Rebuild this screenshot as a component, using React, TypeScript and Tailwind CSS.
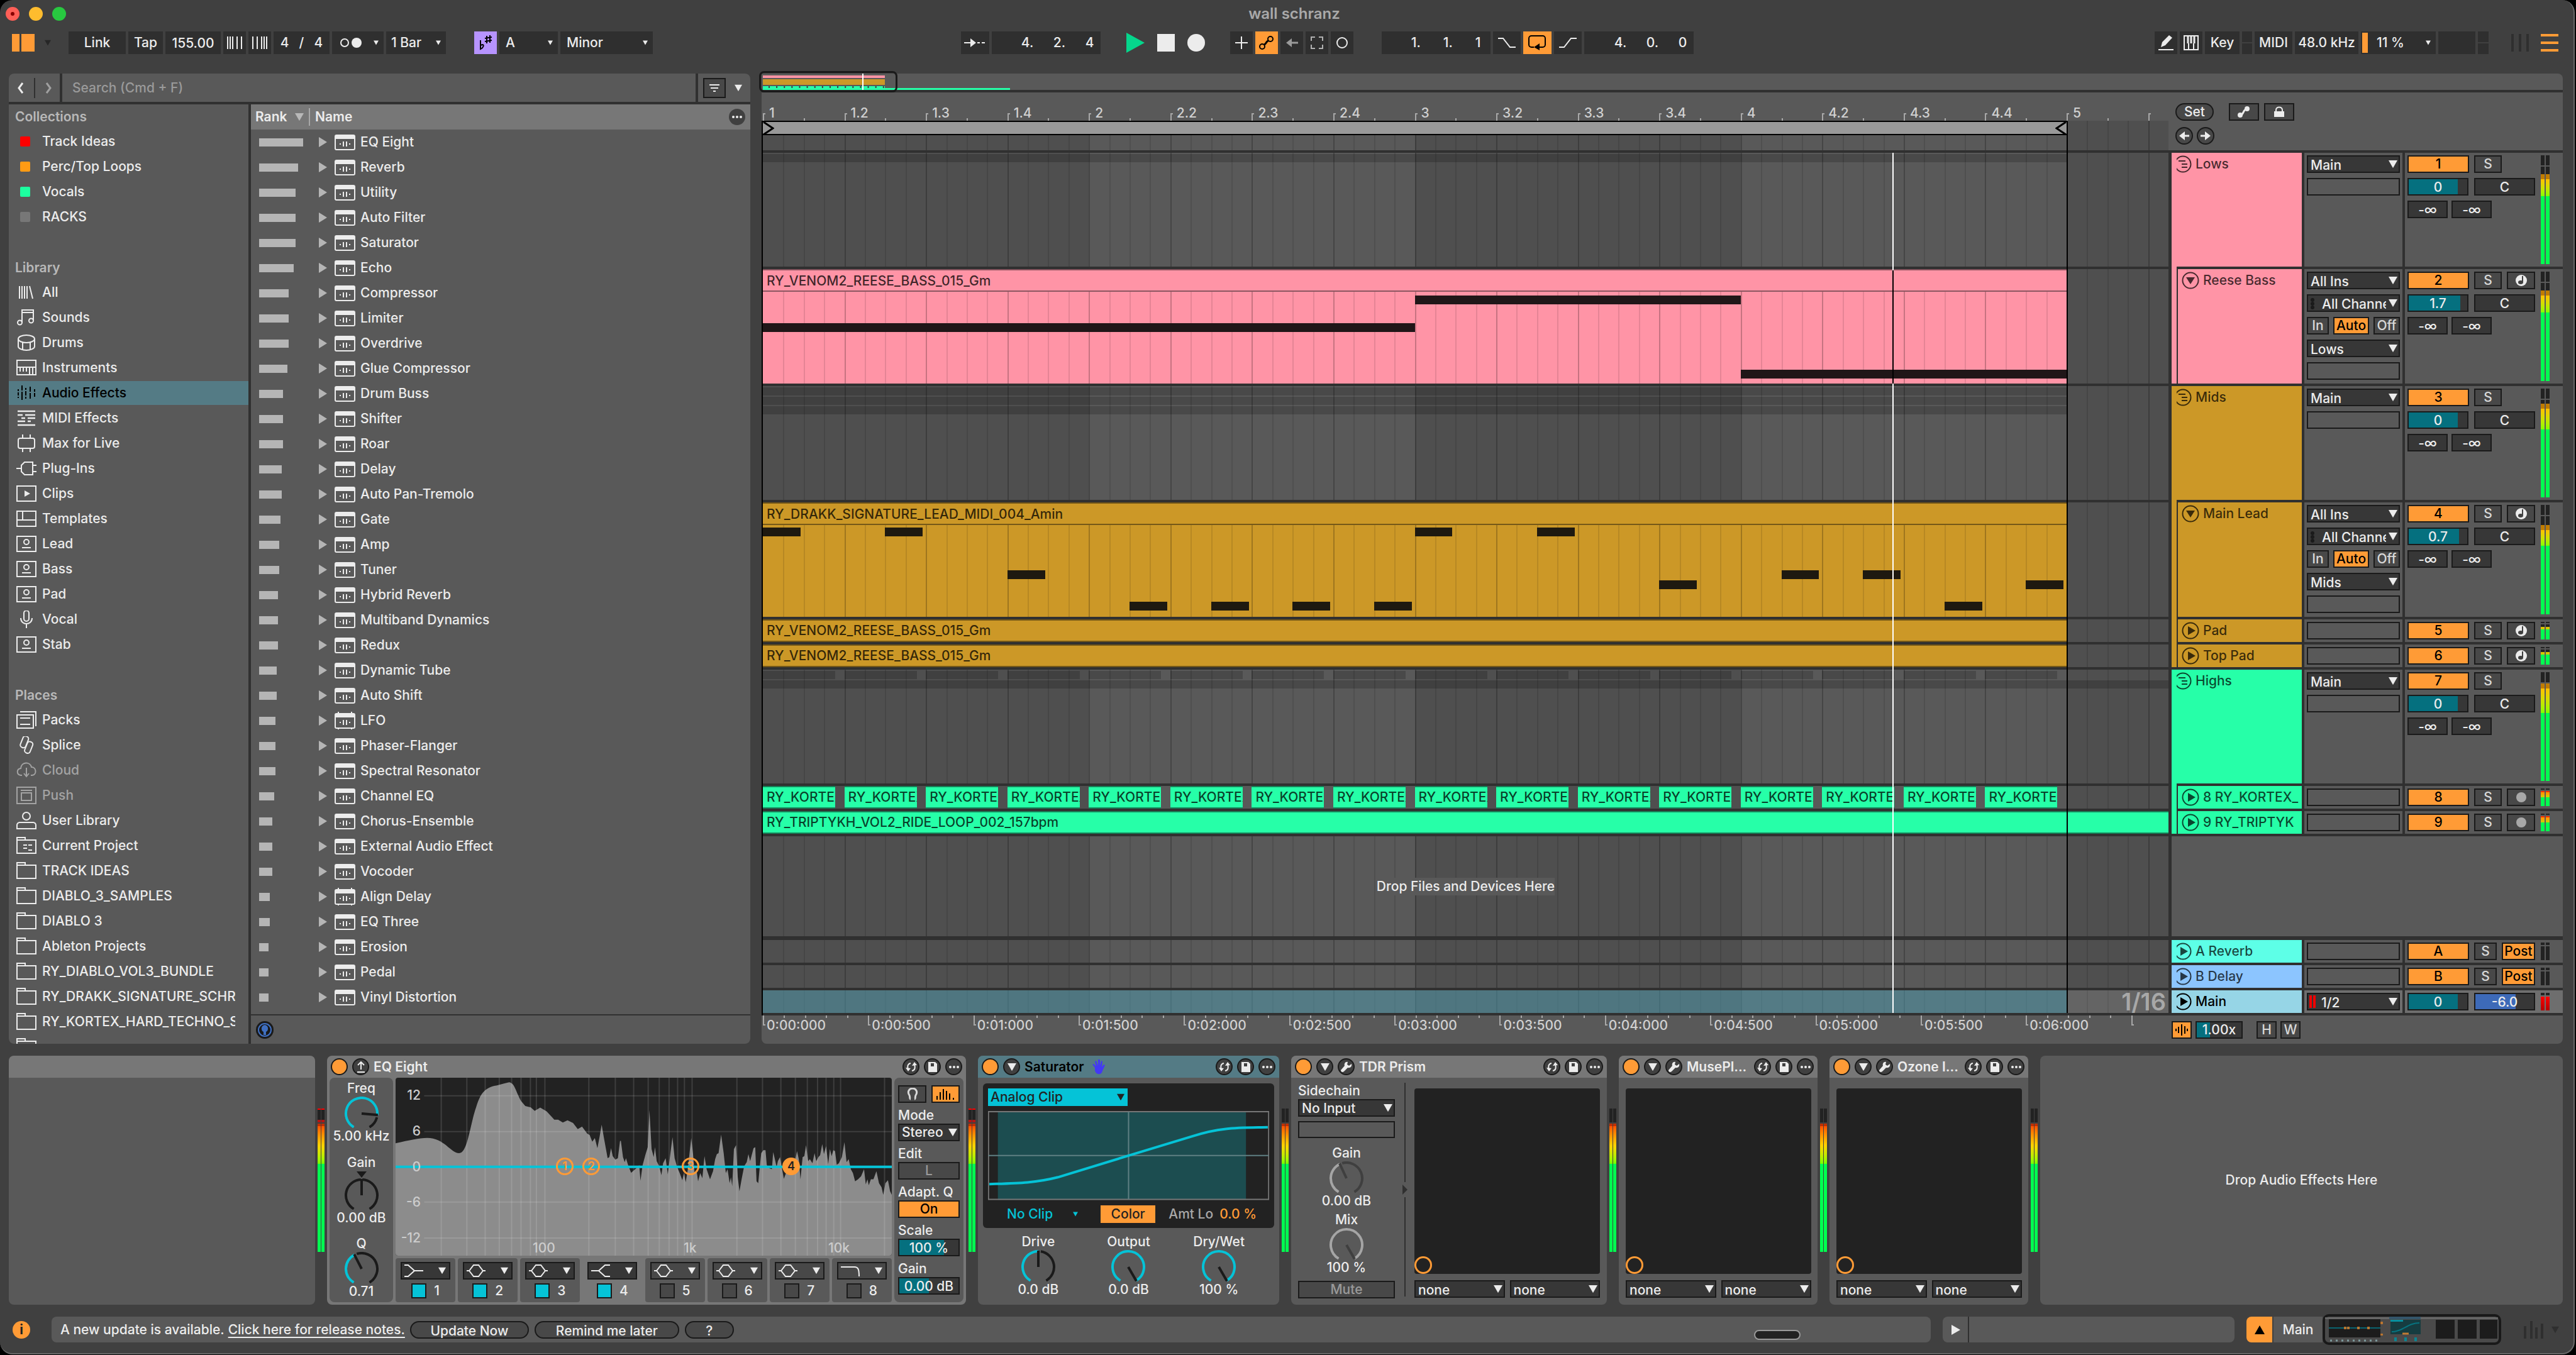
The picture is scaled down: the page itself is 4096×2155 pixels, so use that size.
import type { ReactNode } from "react";
import clsx from "clsx";

/* ---------- small shared pieces ---------- */

function Down({ className = "w-4 h-4" }: { className?: string }) {
  return (
    <svg viewBox="0 0 16 16" className={clsx("shrink-0", className)} fill="currentColor">
      <path d="M0 1h16L8 15z" />
    </svg>
  );
}

function Svg({ w, h, children, className }: { w: number; h: number; children: ReactNode; className?: string }) {
  return (
    <svg
      width={w}
      height={h}
      viewBox={`0 0 ${w} ${h}`}
      fill="none"
      stroke="currentColor"
      strokeWidth="2"
      className={clsx("shrink-0", className)}
    >
      {children}
    </svg>
  );
}

function Select({ value, label, className, pad = "pl-1" }: { value: string; label: string; className?: string; pad?: string }) {
  return (
    <div className={clsx("relative h-7 border-2 border-[#1a1a1a] bg-[#373737] text-[#ececec]", className)}>
      <select aria-label={label} className={clsx("block w-full h-full pr-5 appearance-none bg-transparent outline-none", pad)}>
        <option>{value}</option>
      </select>
      <Down className="absolute right-0.5 top-1 w-3.5 h-4 pointer-events-none" />
    </div>
  );
}

function Value({ value, label, fill = 0, color = "bg-[#05707f]", className }: { value: string; label: string; fill?: number; color?: string; className?: string }) {
  return (
    <div className={clsx("relative h-7 border-2 border-[#1a1a1a] bg-[#373737]", className)}>
      <div className={clsx("absolute inset-y-0 left-0", color)} style={{ width: `${fill}%` }} />
      <input aria-label={label} defaultValue={value} className="relative block w-full h-full bg-transparent text-center text-[#ececec] outline-none" />
    </div>
  );
}

function Box({ children, label, on, dim, className }: { children?: ReactNode; label?: string; on?: boolean; dim?: boolean; className?: string }) {
  return (
    <button
      aria-label={label}
      className={clsx(
        "flex items-center justify-center h-7 border-2 border-[#1a1a1a] overflow-hidden shrink-0",
        on ? "bg-[#ff9b36] text-black" : "bg-[#484848]",
        !on && (dim ? "text-[#9a9a9a]" : "text-[#d8d8d8]"),
        className
      )}
    >
      {children}
    </button>
  );
}

/* ---------- top bar ---------- */

function Cell({ children, className, label, on }: { children?: ReactNode; className?: string; label?: string; on?: boolean }) {
  return (
    <button
      aria-label={label}
      className={clsx("flex items-center h-9 shrink-0", on ? "bg-[#ff9b36] text-black" : "bg-[#2f2f2f] text-[#ececec]", className ?? "justify-center w-9")}
    >
      {children}
    </button>
  );
}

function Position({ parts, className }: { parts: string[]; className?: string }) {
  return (
    <div className={clsx("flex items-center justify-end h-9 bg-[#2f2f2f] text-[#ececec] pr-2.5", className)}>
      <span className="w-[51px]">{parts[0]}.</span>
      <span className="w-[51px]">{parts[1]}.</span>
      <span className="w-3.5">{parts[2]}</span>
    </div>
  );
}

function Toolbar() {
  return (
    <div className="flex items-center h-9 mt-[6px] pl-[19px] pr-6">
      <button aria-label="Browser" className="flex gap-[3px]">
        <span className="w-3 h-7 bg-[#ff9b36]" />
        <span className="w-[21px] h-7 bg-[#ff9b36]" />
      </button>
      <Down className="w-3.5 h-2.5 ml-3.5 mr-[26px] text-[#262626]" />
      <div className="flex gap-1">
        <Cell className="justify-center w-[91px]">Link</Cell>
        <Cell className="justify-center w-[55px]">Tap</Cell>
        <input aria-label="Tempo" defaultValue="155.00" className="w-[88px] h-9 bg-[#2f2f2f] text-center text-[#ececec] outline-none" />
        <Cell label="Nudge down">
          <Svg w={24} h={20}><path d="M1 0v20M5 0v20M9 0v20M16 0v20M23 0v20" /></Svg>
        </Cell>
        <Cell label="Nudge up">
          <Svg w={24} h={20}><path d="M1 0v20M8 0v20M15 0v20M19 0v20M23 0v20" /></Svg>
        </Cell>
        <Cell className="justify-center gap-4 w-[89px]"><span>4</span><span>/</span><span>4</span></Cell>
        <Cell label="Metronome" className="w-[82px] pl-3 pr-1.5 justify-between">
          <Svg w={36} h={16}><circle cx="8" cy="8" r="6" /><circle cx="27" cy="8" r="8" fill="currentColor" stroke="none" /></Svg>
          <Down className="w-3 h-2" />
        </Cell>
        <Cell className="w-[95px] pl-2 pr-1.5 justify-between">1 Bar<Down className="w-3 h-2" /></Cell>
      </div>
      <div className="flex gap-1 ml-[45px]">
        <button aria-label="Scale mode" className="flex items-center justify-center w-9 h-9 bg-[#b794ff] text-black">
          <Svg w={24} h={24}>
            <path d="M4 8v14c5-2 6-7 3-7l-3 1M14 1v12M19 0v12M11 5l11-2M11 10l11-2" />
          </Svg>
        </button>
        <Cell className="w-[93px] pl-2.5 pr-1.5 justify-between">A<Down className="w-3 h-2" /></Cell>
        <Cell className="w-[147px] pl-2.5 pr-1.5 justify-between">Minor<Down className="w-3 h-2" /></Cell>
      </div>

      <div className="flex-[491]" />
      <div className="flex gap-1">
        <Cell label="Follow" className="justify-center w-[45px]">
          <Svg w={34} h={16}><path d="M0 8h14M21 8h4M28 8h5" /><path d="M10 1l9 7-9 7z" fill="currentColor" stroke="none" /></Svg>
        </Cell>
        <Position parts={["4", "2", "4"]} className="w-[173px]" />
      </div>
      <div className="flex items-center gap-5 ml-[41px]">
        <button aria-label="Play"><svg width="29" height="32"><path d="M0 0L29 16L0 32z" fill="#05d68c" /></svg></button>
        <button aria-label="Stop" className="w-7 h-7 bg-[#ececec]" />
        <button aria-label="Record" className="w-7 h-7 rounded-full bg-[#ececec]" />
      </div>
      <div className="flex gap-1 ml-10">
        <Cell label="Overdub"><Svg w={20} h={20}><path d="M10 0v20M0 10h20" /></Svg></Cell>
        <Cell label="Automation arm" on>
          <Svg w={26} h={24}><circle cx="6" cy="18" r="4" /><circle cx="19" cy="6" r="4" /><path d="M9 15c4-1 3-6 7-6" strokeWidth="3" /></Svg>
        </Cell>
        <Cell label="Re-enable automation">
          <Svg w={20} h={16} className="text-[#9a9a9a]"><path d="M8 8h12" strokeWidth="3" /><path d="M10 1L1 8l9 7z" fill="currentColor" stroke="none" /></Svg>
        </Cell>
        <Cell label="Capture MIDI">
          <Svg w={20} h={20} className="text-[#b0b0b0]"><path d="M1 7V1h6M13 1h6v6M19 13v6h-6M7 19H1v-6" /></Svg>
        </Cell>
        <Cell label="Session record"><Svg w={20} h={20}><circle cx="10" cy="10" r="8" /></Svg></Cell>
      </div>
      <div className="flex gap-1 ml-[45px]">
        <Position parts={["1", "1", "1"]} className="w-[173px]" />
        <Cell label="Punch in" className="justify-center w-11"><Svg w={28} h={16}><path d="M0 1h8l11 14h9" /></Svg></Cell>
        <Cell label="Loop" on className="justify-center w-[45px]">
          <Svg w={30} h={24}><path d="M10 19H6a4 4 0 0 1-4-4V5a4 4 0 0 1 4-4h18a4 4 0 0 1 4 4v10a4 4 0 0 1-4 4h-5" /><path d="M10 19l9-6v11z" fill="currentColor" stroke="none" /></Svg>
        </Cell>
        <Cell label="Punch out" className="justify-center w-11"><Svg w={28} h={16}><path d="M0 15h8L19 1h9" /></Svg></Cell>
        <Position parts={["4", "0", "0"]} className="w-[174px]" />
      </div>
      <div className="flex-[735]" />

      <div className="flex gap-1">
        <Cell label="Draw mode">
          <Svg w={24} h={24}><path d="M0 23h24" /><path d="M4 19l2-8L17 0l5 4-11 12z" fill="currentColor" stroke="none" /></Svg>
        </Cell>
        <Cell label="Computer MIDI keyboard">
          <Svg w={24} h={24}><rect x="1" y="1" width="22" height="22" /><path d="M8 13v10M16 13v10" /><path d="M7 1v12M12 1v12M17 1v12" strokeWidth="3" /></Svg>
        </Cell>
        <Cell className="justify-center w-[55px]">Key</Cell>
        <div className="flex flex-col gap-0.5"><span className="w-4 h-[17px] bg-[#2f2f2f]" /><span className="w-4 h-[17px] bg-[#2f2f2f]" /></div>
        <Cell className="justify-center w-[60px]">MIDI</Cell>
        <Cell className="justify-center w-[101px] whitespace-nowrap">48.0 kHz</Cell>
        <Cell className="w-[119px] pl-0.5 pr-1.5">
          <span className="w-[9px] h-8 bg-[#ff9b36]" />
          <span className="ml-3.5 grow text-left">11 %</span>
          <Down className="w-3 h-2" />
        </Cell>
        <Cell className="w-[59px]" />
        <div className="flex flex-col gap-0.5"><span className="w-[17px] h-[17px] bg-[#2f2f2f]" /><span className="w-[17px] h-[17px] bg-[#2f2f2f]" /></div>
      </div>
      <div className="flex gap-2 ml-9">
        <span className="w-1 h-7 bg-[#2f2f2f]" /><span className="w-1 h-7 bg-[#2f2f2f]" /><span className="w-1 h-7 bg-[#2f2f2f]" />
      </div>
      <button aria-label="Views" className="flex flex-col gap-2 ml-[19px]">
        <span className="w-7 h-1 bg-[#ff9b36]" /><span className="w-7 h-1 bg-[#ff9b36]" /><span className="w-7 h-1 bg-[#ff9b36]" />
      </button>
    </div>
  );
}

/* ---------- browser ---------- */

const folder = <path d="M1 5h30v21H1zM1 9V1h13v4" />;
const preset = <><rect x="1" y="2" width="30" height="24" /><circle cx="16" cy="11" r="4" /><path d="M9 20h14" /></>;

const ICONS: Record<string, ReactNode> = {
  All: <path d="M5 4v20M9 4v20M13 4v20M17 4v20M21 4l5 20" />,
  Sounds: <><path d="M9 22V2h18v16M9 6h18" /><circle cx="5.500" cy="22" r="3.500" /><circle cx="23.500" cy="19" r="3.500" /></>,
  Drums: <><ellipse cx="16" cy="8" rx="13" ry="6" /><path d="M3 8v12c0 3 6 6 13 6s13-3 13-6V8M10 14v11M22 14v11" /></>,
  Instruments: <path d="M1 2h30v23H1zM1 13h30M6 13v7M11 13v7M16 13v7M21 13v12M26 13v12" />,
  "Audio Effects": <path d="M3 8v3M3 13v5M3 20v2M9 2v8M9 12v13M15 6v3M15 11v7M15 20v3M22 4v8M22 14v9M29 8v4M29 14v6" />,
  "MIDI Effects": <path d="M2 3h28M2 9h8M14 9h16M8 14h6M18 14h12M2 19h12M18 19h5M2 25h28" strokeWidth="2.500" />,
  "Max for Live": <><rect x="3" y="6" width="26" height="16" rx="3" /><path d="M10 0v6M22 0v6M10 22v6M22 22v6" /></>,
  "Plug-Ins": <path d="M0 14h8M26 4H13l-5 5v10l5 5h13zM26 9h6M26 19h6" />,
  Clips: <><rect x="1" y="2" width="30" height="24" /><path d="M13 9l9 5-9 5z" fill="currentColor" stroke="none" /></>,
  Templates: <path d="M1 2h30v24H1zM1 16h30M10 2v14" />,
  Lead: preset,
  Bass: preset,
  Pad: preset,
  Stab: preset,
  Vocal: <><rect x="12" y="0" width="8" height="17" rx="4" /><path d="M7 12c0 12 18 12 18 0M16 21v7" /></>,
  Packs: <path d="M1 6h26v21H1zM6 1h25v23M6 11h16M6 21h16" />,
  Splice: <><rect x="8" y="0" width="9" height="19" rx="4" transform="rotate(22 14 10)" /><rect x="15" y="8" width="9" height="19" rx="4" transform="rotate(22 19 18)" /></>,
  Cloud: <path d="M9 22H7c-7-1-7-10 0-11C8 0 22 0 24 9c8 0 9 12 1 13h-2M16 10v13M12 19l4 5 4-5" />,
  Push: <><rect x="1" y="1" width="30" height="26" /><path d="M7 6h18" /><rect x="8" y="10" width="16" height="12" /></>,
  "User Library": <><circle cx="16" cy="7" r="6" /><path d="M1 27v-6c0-2 2-4 4-4h22c2 0 4 2 4 4v6z" /></>,
  "Current Project": <>{folder}<path d="M11 13h6M19 13h6M11 18h6M19 21h6" /></>,
};

function Section({ title, children }: { title: string; children: ReactNode }) {
  return (
    <section>
      <h2 className="flex items-center h-[39px] pl-2.5 text-[#b8b8b8] font-semibold">{title}</h2>
      <ul>{children}</ul>
    </section>
  );
}

function Item({ name, icon, dim, on }: { name: string; icon?: ReactNode; dim?: boolean; on?: boolean }) {
  return (
    <li
      className={clsx(
        "flex items-center h-10 pl-3 pr-[21px] gap-[9px] whitespace-nowrap",
        dim ? "text-[#a3a3a3]" : on ? "text-black bg-[#547b85] border-y border-[#595959]" : "text-[#ececec]"
      )}
    >
      {icon ?? <Svg w={32} h={28}>{ICONS[name] ?? folder}</Svg>}
      <span className="overflow-hidden">{name}</span>
    </li>
  );
}

const COLLECTIONS = [
  ["Track Ideas", "bg-[#ff0000]"],
  ["Perc/Top Loops", "bg-[#ff9b14]"],
  ["Vocals", "bg-[#1cffa0]"],
  ["RACKS", "bg-[#777777]"],
];
const LIBRARY = ["All", "Sounds", "Drums", "Instruments", "Audio Effects", "MIDI Effects", "Max for Live", "Plug-Ins", "Clips", "Templates", "Lead", "Bass", "Pad", "Vocal", "Stab"];
const PLACES = ["Packs", "Splice", "Cloud", "Push", "User Library", "Current Project", "TRACK IDEAS", "DIABLO_3_SAMPLES", "DIABLO 3", "Ableton Projects", "RY_DIABLO_VOL3_BUNDLE", "RY_DRAKK_SIGNATURE_SCHR", "RY_KORTEX_HARD_TECHNO_S"];

// [name, rank bar width]
const EFFECTS: [string, number][] = [
  ["EQ Eight", 70], ["Reverb", 62], ["Utility", 58], ["Auto Filter", 58], ["Saturator", 58], ["Echo", 55],
  ["Compressor", 47], ["Limiter", 47], ["Overdrive", 47], ["Glue Compressor", 45], ["Drum Buss", 38],
  ["Shifter", 38], ["Roar", 38], ["Delay", 36], ["Auto Pan-Tremolo", 36], ["Gate", 34], ["Amp", 32],
  ["Tuner", 32], ["Hybrid Reverb", 30], ["Multiband Dynamics", 30], ["Redux", 30], ["Dynamic Tube", 28],
  ["Auto Shift", 28], ["LFO", 26], ["Phaser-Flanger", 26], ["Spectral Resonator", 26], ["Channel EQ", 24],
  ["Chorus-Ensemble", 21], ["External Audio Effect", 21], ["Vocoder", 21], ["Align Delay", 17],
  ["EQ Three", 17], ["Erosion", 15], ["Pedal", 15], ["Vinyl Distortion", 15],
];

function DeviceIcon({ max }: { max: boolean }) {
  return (
    <Svg w={33} h={28}>
      <rect x="1" y="3" width="31" height="23" rx="2" />
      <path d="M1 3h31v6H1z" fill="currentColor" stroke="none" />
      <path d="M9 16v2M14 13v8M19 13v8M24 16v2" />
      {max && <path d="M6 0v3M27 0v3M6 26v2M27 26v2" />}
    </Svg>
  );
}

function Browser() {
  return (
    <div className="flex flex-col w-[1179px] shrink-0 rounded-lg overflow-hidden bg-[#303030]">
      <div className="flex h-[45px] mb-1 gap-1">
        <div className="flex items-center justify-center gap-[15px] w-[81px] bg-[#595959]">
          <button aria-label="Back"><Svg w={12} h={18} className="text-[#ececec]"><path d="M9 1L3 9l6 8" strokeWidth="3" /></Svg></button>
          <span className="w-0.5 h-8 bg-[#303030]" />
          <button aria-label="Forward"><Svg w={12} h={18} className="text-[#a0a0a0]"><path d="M3 1l6 8-6 8" strokeWidth="3" /></Svg></button>
        </div>
        <input aria-label="Search" placeholder="Search (Cmd + F)" className="grow px-4 bg-[#595959] placeholder:text-[#9a9a9a] outline-none" />
        <div className="flex items-center w-[83px] pl-2 gap-3 bg-[#595959] text-[#ececec]">
          <button aria-label="Filter" className="flex items-center justify-center w-9 h-8 border-2 border-[#1a1a1a] bg-[#484848]">
            <Svg w={16} h={12}><path d="M0 1h16M2 6h12M6 11h4" /></Svg>
          </button>
          <Down className="w-4 h-3" />
        </div>
      </div>
      <div className="flex grow gap-1">
        <nav className="relative w-[381px] shrink-0 bg-[#595959]">
          <div className="absolute inset-0 overflow-hidden flex flex-col gap-[41px]">
            <Section title="Collections">
              {COLLECTIONS.map(([name, bg]) => (
                <Item key={name} name={name} icon={<span className={clsx("w-4 h-4 ml-1.5 mr-2.5 rounded-xs", bg)} />} />
              ))}
            </Section>
            <Section title="Library">
              {LIBRARY.map((n) => <Item key={n} name={n} on={n === "Audio Effects"} />)}
            </Section>
            <Section title="Places">
              {PLACES.map((n) => <Item key={n} name={n} dim={n === "Cloud" || n === "Push"} />)}
              <Item name="" icon={<Svg w={32} h={28}>{folder}</Svg>} />
            </Section>
          </div>
        </nav>
        <div className="flex flex-col grow">
          <table className="w-full bg-[#595959] text-[#ececec] border-collapse">
            <thead>
              <tr className="h-10 bg-[#777777] text-left">
                <th className="w-[94px] p-0 pl-[7px] font-semibold">
                  <span className="flex items-center gap-3 border-r-2 border-[#a8a8a8]">Rank <Down className="w-4 h-3.5 text-[#b8b8b8]" /></span>
                </th>
                <th className="p-0 pl-2 pr-2 font-semibold">
                  <span className="flex items-center justify-between">
                    Name
                    <button aria-label="Columns" className="w-[26px] h-[26px] rounded-full bg-[#404040] flex items-center justify-center gap-0.5">
                      <i className="w-1 h-1 rounded-full bg-[#ececec]" /><i className="w-1 h-1 rounded-full bg-[#ececec]" /><i className="w-1 h-1 rounded-full bg-[#ececec]" />
                    </button>
                  </span>
                </th>
              </tr>
            </thead>
            <tbody>
              {EFFECTS.map(([name, rank]) => (
                <tr key={name} className="h-10">
                  <td className="p-0 pl-[13px]"><div className="h-[13px] bg-[#b5b5b5]" style={{ width: rank }} /></td>
                  <td className="p-0 pl-3.5">
                    <span className="flex items-center">
                      <svg width="13" height="16" fill="#b5b5b5"><path d="M0 0l13 8-13 8z" /></svg>
                      <span className="ml-3 mr-2"><DeviceIcon max={name === "LFO" || name === "Align Delay"} /></span>
                      {name}
                    </span>
                  </td>
                </tr>
              ))}
            </tbody>
          </table>
          <div className="grow bg-[#595959]" />
          <div className="flex items-center h-[45px] mt-0.5 pl-2 bg-[#595959]">
            <button aria-label="Preview" className="flex items-center justify-center w-7 h-7 rounded-full bg-[#1a1a1a]">
              <svg width="24" height="24" fill="none" stroke="#3f6fc0" strokeWidth="2">
                <circle cx="12" cy="12" r="10" />
                <path d="M12 4c-7 1-6 10-2 11v5h4v-5c4-1 5-10-2-11z" fill="#3f6fc0" stroke="none" />
              </svg>
            </button>
          </div>
        </div>
      </div>
    </div>
  );
}

/* ---------- arrangement ---------- */

const STEPS = 69; // sixteenths on screen
const at = (step: number) => `${(step * 100) / STEPS}%`;

function Lines({ steps }: { steps: number }) {
  return (
    <>
      {Array.from({ length: steps }, (_, i) => (
        <div
          key={i}
          className={clsx("absolute inset-y-0 w-0.5", i % 4 ? "bg-black/10" : "bg-black/22")}
          style={{ left: `${(i * 100) / steps}%` }}
        />
      )).slice(1)}
    </>
  );
}

function Backdrop() {
  return (
    <div className="absolute inset-0 bg-[#595959]">
      {[0, 32, 64].map((s) => (
        <div key={s} className="absolute inset-y-0 bg-black/10" style={{ left: at(s), width: at(s === 64 ? 5 : 16) }} />
      ))}
      <Lines steps={STEPS} />
    </div>
  );
}

function Ruler() {
  return (
    <div className="relative h-[45px] ml-0.5 text-[#d0d0d0]">
      {Array.from({ length: 35 }, (_, i) => {
        const beat = i / 2;
        if (i % 2) return <i key={i} className="absolute bottom-0 w-0.5 h-1 bg-[#a8a8a8]" style={{ left: at(i * 2) }} />;
        const label = beat % 4 ? `${Math.floor(beat / 4) + 1}.${(beat % 4) + 1}` : `${beat / 4 + 1}`;
        return (
          <div key={i} className="absolute bottom-0 h-3 w-1 border-l-2 border-t-2 border-[#a8a8a8]" style={{ left: at(i * 2) }}>
            {beat < 17 && <span className="absolute left-2 -top-4 leading-7">{label}</span>}
          </div>
        );
      })}
    </div>
  );
}

const STYLES = {
  pink: { bg: "bg-[#ff94a6]", edge: "border-[#8b5560]" },
  gold: { bg: "bg-[#cc9827]", edge: "border-[#755818]" },
  green: { bg: "bg-[#26ffa8]", edge: "border-[#17855b]" },
};

function MidiClip({ color, name, notes }: { color: "pink" | "gold"; name: string; notes: [number, number, string][] }) {
  const s = STYLES[color];
  return (
    <div className={clsx("flex flex-col h-full border-t-2", s.bg, s.edge)} style={{ width: at(64) }}>
      <div className={clsx("h-[34px] pl-1.5 flex items-center border-b-2 text-black/75 pt-0.5", s.edge)}>{name}</div>
      <div className="relative grow">
        <Lines steps={64} />
        {notes.map(([start, len, top], i) => (
          <div
            key={i}
            className={clsx("absolute h-3.5", top, color === "pink" ? "bg-[#201618]" : "bg-[#1e1910]")}
            style={{ left: `${(start * 100) / 64}%`, width: `${(len * 100) / 64}%` }}
          />
        ))}
      </div>
    </div>
  );
}

function Clip({ color, name, start = 0, len }: { color: "gold" | "green"; name: string; start?: number; len: number }) {
  const s = STYLES[color];
  return (
    <div
      className={clsx("absolute inset-y-0 flex items-center border-y-2 pl-1.5 overflow-hidden whitespace-nowrap text-black/75", s.bg, s.edge)}
      style={{ left: at(start), width: at(len) }}
    >
      {name}
    </div>
  );
}

const REESE: [number, number, string][] = [[0, 32, "top-[50px]"], [32, 16, "top-[6px]"], [48, 16, "top-[124px]"]];
const N = 1.85;
const LEAD: [number, number, string][] = [
  [0, N, "top-1"], [6, N, "top-1"], [12, N, "top-[72px]"], [18, N, "top-[122px]"], [22, N, "top-[122px]"],
  [26, N, "top-[122px]"], [30, N, "top-[122px]"], [32, N, "top-1"], [38, N, "top-1"], [44, N, "top-[88px]"],
  [50, N, "top-[72px]"], [54, N, "top-[72px]"], [58, N, "top-[122px]"], [62, N, "top-[88px]"],
];
const BEATS = Array.from({ length: 16 }, (_, i) => i * 4);

const lane = "relative border-b-4 border-[#303030]";

function Strip({ to = 64 }: { to?: number }) {
  return <div className="h-[13px] mb-0.5 bg-black/18" style={{ width: at(to) }} />;
}

function Timeline() {
  return (
    <div className="flex flex-col grow min-w-0">
      <Ruler />
      <div className="relative border-l-2 border-black">
        <Backdrop />
        <div className={clsx(lane, "h-[51px]")}>
          <div className="flex items-center justify-between h-[23px] border-y-2 border-black bg-[#999999] text-black" style={{ width: at(64) }}>
            <Svg w={18} h={20}><path d="M1 0l15 10L1 20" strokeWidth="3" /></Svg>
            <Svg w={18} h={20}><path d="M17 0L2 10l15 10" strokeWidth="3" /></Svg>
          </div>
        </div>
        <div className={clsx(lane, "h-[185px] pt-0.5")}><Strip /></div>
        <div className={clsx(lane, "h-[186px]")}>
          <MidiClip color="pink" name="RY_VENOM2_REESE_BASS_015_Gm" notes={REESE} />
        </div>
        <div className={clsx(lane, "h-[185px] pt-0.5")}><Strip /><Strip /><Strip /></div>
        <div className={clsx(lane, "h-[186px]")}>
          <MidiClip color="gold" name="RY_DRAKK_SIGNATURE_LEAD_MIDI_004_Amin" notes={LEAD} />
        </div>
        <div className={clsx(lane, "h-10")}><Clip color="gold" name="RY_VENOM2_REESE_BASS_015_Gm" len={64} /></div>
        <div className={clsx(lane, "h-10")}><Clip color="gold" name="RY_VENOM2_REESE_BASS_015_Gm" len={64} /></div>
        <div className={clsx(lane, "h-[185px] pt-0.5")}>
          <div className="relative h-[15px]">
            {BEATS.map((b) => <div key={b} className="absolute h-[13px] bg-black/18" style={{ left: at(b), width: at(3.55) }} />)}
          </div>
          <Strip to={STEPS} />
        </div>
        <div className={clsx(lane, "h-10")}>
          {BEATS.map((b) => <Clip key={b} color="green" name="RY_KORTEX" start={b} len={3.55} />)}
        </div>
        <div className={clsx(lane, "h-10")}><Clip color="green" name="RY_TRIPTYKH_VOL2_RIDE_LOOP_002_157bpm" len={STEPS} /></div>
        <div className="relative flex items-center justify-center h-[165px] border-b-[6px] border-[#303030]">
          <span className="bg-[#595959] text-[#ececec]">Drop Files and Devices Here</span>
        </div>
        <div className={clsx(lane, "h-10")} />
        <div className={clsx(lane, "h-10")} />
        <div className={clsx(lane, "h-10 flex")}>
          <div className="h-full bg-[#4f9db1]/50" style={{ width: at(64) }} />
          <div className="flex items-center justify-end grow bg-white/12 pr-1 text-[38px] font-semibold leading-9 text-[#a8a8a8]">1/16</div>
        </div>
        {/* loop end and playhead */}
        <div className="absolute top-0 bottom-1 w-0.5 bg-black" style={{ left: at(64) }} />
        <div className="absolute top-[51px] bottom-1 w-0.5 bg-white" style={{ left: at(55.45) }} />
        <div className="absolute top-[238px] h-[180px] w-0.5 bg-black" style={{ left: at(55.45) }} />
      </div>
      <div className="relative h-[45px] ml-0.5 text-[#d0d0d0]">
        {Array.from({ length: 66 }, (_, i) => {
          const left = `${i * 1.4976}%`;
          if (i % 5) return <i key={i} className="absolute top-0 w-0.5 h-1 bg-[#a8a8a8]" style={{ left }} />;
          const half = i / 5;
          return (
            <div key={i} className="absolute top-0 h-4 w-1 border-l-2 border-b-2 border-[#a8a8a8]" style={{ left }}>
              {half < 13 && <span className="absolute left-1 top-0.5 leading-7">{`0:0${Math.floor(half / 2)}:${half % 2 ? "500" : "000"}`}</span>}
            </div>
          );
        })}
      </div>
    </div>
  );
}

/* ---------- track headers ---------- */

type Track = {
  name: string;
  color: string;
  kind: "group" | "midi" | "fold" | "audio" | "return" | "main";
  num?: string;
  out?: string;
  vol?: string;
  fill?: number;
  last?: boolean;
  hot?: number;
};

const PINK = "bg-[#ff94a6]";
const GOLD = "bg-[#cc9827]";
const GREEN = "bg-[#26ffa8]";

const TRACKS: Track[] = [
  { name: "Lows", color: PINK, kind: "group", num: "1", out: "Main", vol: "0", fill: 84, hot: 34 },
  { name: "Reese Bass", color: PINK, kind: "midi", num: "2", out: "Lows", vol: "1.7", fill: 88, last: true, hot: 34 },
  { name: "Mids", color: GOLD, kind: "group", num: "3", out: "Main", vol: "0", fill: 84, hot: 40 },
  { name: "Main Lead", color: GOLD, kind: "midi", num: "4", out: "Mids", vol: "0.7", fill: 86, hot: 32 },
  { name: "Pad", color: GOLD, kind: "fold", num: "5" },
  { name: "Top Pad", color: GOLD, kind: "fold", num: "6", last: true },
  { name: "Highs", color: GREEN, kind: "group", num: "7", out: "Main", vol: "0", fill: 84, hot: 46 },
  { name: "8 RY_KORTEX_", color: GREEN, kind: "audio", num: "8" },
  { name: "9 RY_TRIPTYK", color: GREEN, kind: "audio", num: "9", last: true },
];
const RETURNS: Track[] = [
  { name: "A Reverb", color: "bg-[#5dffe7]", kind: "return", num: "A", last: true },
  { name: "B Delay", color: "bg-[#8cc5ff]", kind: "return", num: "B", last: true },
  { name: "Main", color: "bg-[#96d5e6]", kind: "main", last: true },
];

function MeterBar({ t }: { t: Track }) {
  if (t.kind === "main")
    return <div className="flex flex-col w-1.5 gap-0.5"><i className="h-1 bg-[#222]" /><i className="grow bg-linear-to-b from-[#ff0000] to-[#b40000]" /></div>;
  if (t.kind === "return")
    return <div className="flex flex-col w-1.5 gap-0.5"><i className="h-1 bg-[#222]" /><i className="grow bg-[#222]" /></div>;
  if (!t.hot)
    return (
      <div className="flex flex-col w-1.5">
        <i className="h-0.5 mb-0.5 bg-[#222]" />
        {t.kind === "audio" && <i className="h-0.5 bg-[#ff3000]" />}
        <i className={clsx("h-1", t.kind === "audio" ? "bg-[#ff9b00]" : "bg-[#222]")} />
        <i className="h-1 bg-[#d9c400]" />
        <i className="grow bg-[#00ff50]" />
      </div>
    );
  return (
    <div className="flex flex-col w-1.5">
      <i className="h-4 mb-0.5 bg-[#222]" />
      <i style={{ height: 46 - t.hot }} className="bg-[#222]" />
      <i className="h-2 bg-[#c07c00]" />
      <i className="bg-linear-to-b from-[#ffc000] to-[#80ff00]" style={{ height: t.hot - 7 }} />
      <i className="grow bg-[#00ff50]" />
    </div>
  );
}

function TrackIcon({ kind }: { kind: Track["kind"] }) {
  return (
    <Svg w={28} h={28}>
      <circle cx="14" cy="14" r="12.500" />
      {kind === "group" && <path d="M7 9h11M12 14h9M12 19h9" />}
      {kind === "midi" && <path d="M7 9h14l-7 11z" fill="currentColor" stroke="none" />}
      {kind !== "group" && kind !== "midi" && <path d="M10 7l12 7-12 7z" fill="currentColor" stroke="none" />}
    </Svg>
  );
}

const EmptySlot = () => <div className="h-7 border-2 border-[#1a1a1a]" />;

function TrackIO({ t }: { t: Track }) {
  return (
    <div className={clsx("flex flex-col gap-2 w-[156px] ml-1 mb-1 pt-1 px-1 shrink-0", t.kind === "main" ? "bg-[#6e6e6e]" : "bg-[#595959]")}>
      {t.kind === "midi" && (
        <>
          <Select label={`${t.name} input`} value="All Ins" />
          <div className="relative">
            <Select label={`${t.name} channel`} value="All Channels" pad="pl-[22px]" />
            <span className="absolute left-1.5 top-1.5 flex flex-col">
              <i className="w-1.5 h-1.5 rounded-full bg-[#1a1a1a]" /><i className="w-1.5 h-1.5 rounded-full bg-[#1a1a1a]" /><i className="w-1.5 h-1.5 rounded-full bg-[#1a1a1a]" />
            </span>
          </div>
          <div className="flex justify-between">
            <Box className="w-[35px]">In</Box>
            <Box on className="w-[57px]">Auto</Box>
            <Box className="w-[42px]">Off</Box>
          </div>
        </>
      )}
      {t.out && <Select label={`${t.name} output`} value={t.out} />}
      {t.kind === "main" ? (
        <div className="relative">
          <Select label="Main output" value="1/2" pad="pl-[21px]" />
          <span className="absolute left-1 top-1 flex gap-0.5"><i className="w-1 h-5 bg-[#f00000]" /><i className="w-1 h-5 bg-[#f00000]" /></span>
        </div>
      ) : (
        <EmptySlot />
      )}
    </div>
  );
}

function TrackMixer({ t }: { t: Track }) {
  const short = t.kind === "return";
  return (
    <div className={clsx("flex grow ml-1 mb-1 pt-1 pl-1 pr-[21px] justify-between", t.kind === "main" ? "bg-[#6e6e6e]" : "bg-[#595959]")}>
      <div className="flex flex-col gap-2 w-[203px]">
        {t.kind === "main" ? (
          <div className="flex justify-between">
            <Value label="Main volume" value="0" fill={84} className="w-[97px]" />
            <Value label="Cue volume" value="-6.0" fill={69} color="bg-[#3d6ab8]" className="w-[97px]" />
          </div>
        ) : (
          <div className="flex gap-2">
            <Box on label={`Track ${t.num} active`} className="w-[98px]">{t.num}</Box>
            <Box label="Solo" className={short ? "w-9" : "w-[44px]"}>S</Box>
            {t.kind === "return" && <Box on className="w-[53px]">Post</Box>}
            {(t.kind === "midi" || t.kind === "fold") && (
              <Box label="Arm" className="w-[45px]">
                <svg width="18" height="18">
                  <circle cx="9" cy="9" r="9" fill="#ececec" />
                  <path d="M11 2v9" stroke="#404040" strokeWidth="2" />
                  <ellipse cx="8" cy="12" rx="4" ry="3" fill="#404040" />
                </svg>
              </Box>
            )}
            {t.kind === "audio" && <Box label="Arm" className="w-[45px]"><i className="w-4 h-4 rounded-full bg-[#a8a8a8]" /></Box>}
          </div>
        )}
        {t.vol && (
          <>
            <div className="flex justify-between">
              <Value label={`${t.name} volume`} value={t.vol} fill={t.fill} className="w-[97px]" />
              <Value label={`${t.name} pan`} value="C" className="w-[97px]" />
            </div>
            <div className="flex gap-[6px]">
              <Value label={`${t.name} send A`} value="-∞" className="w-[64px]" />
              <Value label={`${t.name} send B`} value="-∞" className="w-[64px]" />
            </div>
          </>
        )}
      </div>
      <div className="flex gap-0.5 mb-1"><MeterBar t={t} /><MeterBar t={t} /></div>
    </div>
  );
}

function TrackHeader({ t }: { t: Track }) {
  const nested = t.kind === "midi" || t.kind === "fold" || t.kind === "audio";
  return (
    <div className={clsx("flex", t.kind === "group" ? "h-[185px]" : t.kind === "midi" ? "h-[186px]" : "h-10")}>
      <div className={clsx("w-2 shrink-0", t.color, t.last && "mb-1")} />
      <div
        className={clsx(
          "flex gap-1.5 pt-1 mb-1 shrink-0 overflow-hidden whitespace-nowrap leading-7",
          t.color,
          nested ? "w-[197px] ml-0.5 pl-1.5" : "w-[199px]",
          t.kind === "main" ? "text-black" : "text-black/72"
        )}
      >
        <div className={nested ? "" : "-ml-1"}><TrackIcon kind={t.kind} /></div>
        <span>{t.name}</span>
      </div>
      <TrackIO t={t} />
      <TrackMixer t={t} />
    </div>
  );
}

const round = "flex items-center justify-center border-2 border-[#1a1a1a] bg-[#484848] text-[#ececec]";

function Headers() {
  return (
    <div className="flex flex-col w-[627px] shrink-0 bg-[#303030] pl-[5px]">
      <div className="flex flex-col gap-2.5 h-[92px] -ml-[5px] pl-[11px] pt-[17px] bg-[#595959] mb-1">
        <div className="flex">
          <button className={clsx(round, "w-[61px] h-7 rounded-full")}>Set</button>
          <button aria-label="Automation mode" className={clsx(round, "w-12 h-7 ml-6")}>
            <Svg w={20} h={18}><path d="M4 14c6 0 4-9 11-10" strokeWidth="3" /><circle cx="4" cy="14" r="3" fill="currentColor" /><circle cx="15" cy="4" r="3" fill="currentColor" /></Svg>
          </button>
          <button aria-label="Lock envelopes" className={clsx(round, "w-12 h-7 ml-2")}>
            <Svg w={18} h={18}><path d="M4 8V6c0-6 10-6 10 0v2" /><path d="M1 8h16v9H1z" fill="currentColor" stroke="none" /></Svg>
          </button>
        </div>
        <div className="flex gap-[6px]">
          <button aria-label="Previous locator" className={clsx(round, "w-7 h-7 rounded-full")}>
            <Svg w={16} h={14}><path d="M6 7h10" strokeWidth="3" /><path d="M9 0v14L0 7z" fill="currentColor" stroke="none" /></Svg>
          </button>
          <button aria-label="Next locator" className={clsx(round, "w-7 h-7 rounded-full")}>
            <Svg w={16} h={14}><path d="M0 7h10" strokeWidth="3" /><path d="M7 0v14l9-7z" fill="currentColor" stroke="none" /></Svg>
          </button>
        </div>
      </div>
      {TRACKS.map((t) => <TrackHeader key={t.name} t={t} />)}
      <div className="h-[159px] mb-1.5 bg-[#595959]" />
      {RETURNS.map((t) => <TrackHeader key={t.name} t={t} />)}
      <div className="flex items-center h-[45px] -ml-[5px] pl-[5px] bg-[#595959]">
        <Box on label="Optimize height" className="w-8"><Svg w={22} h={20}><path d="M2 8v4M6 5v10M11 1v18M16 4v12M20 8v4" /></Svg></Box>
        <Value label="Playback speed" value="1.00x" fill={30} className="w-[75px] ml-1.5" />
        <Box className="w-8 ml-[22px]">H</Box>
        <Box className="w-8 ml-[6px]">W</Box>
      </div>
    </div>
  );
}

function Overview() {
  return (
    <div className="relative h-[26px] mb-1 bg-[#595959] rounded-tr-lg shadow-[0_4px_0_#303030]">
      <svg className="absolute left-0 top-0" width="400" height="26">
        <path d="M2 3h194v4H2z" fill="#ff94a6" />
        <path d="M2 9h194v9H2z" fill="#cc9827" />
        <path d="M2 20h194v3H2z" fill="#26ffa8" />
        {BEATS.map((b) => <path key={b} d={`M${12 + b * 3.03} 20v3`} stroke="#404040" strokeWidth="2" />)}
        <path d="M2 23h393v3H2z" fill="#26ffa8" />
        <path d="M161 0v26" stroke="#fff" strokeWidth="2" />
      </svg>
      <div className="absolute -left-1 -top-1 w-[220px] h-[34px] rounded-lg border-[3px] border-[#1a1a1a]" />
    </div>
  );
}

/* ---------- devices ---------- */

function Meter({ clip }: { clip?: boolean }) {
  const bar = (
    <div className="flex flex-col w-[5px] h-[228px]">
      <i className={clsx("h-0.5", clip ? "bg-[#ff0000]" : "bg-[#222]")} />
      <i className={clsx("bg-[#222]", clip ? "h-4" : "h-[20px]")} />
      {clip && <i className="h-1 bg-[#b41414]" />}
      <i className="h-1 mt-0.5 bg-[#c03000]" />
      <i className="h-[60px] bg-linear-to-b from-[#ff5000] via-[#ffd000] to-[#70ff00]" />
      <i className="grow bg-[#00ff50]" />
    </div>
  );
  return <div className="flex justify-center gap-px w-[19px] shrink-0 pt-[84px]">{bar}{bar}</div>;
}

function Knob({ label, value, v, bipolar, off }: { label: string; value: string; v: number; bipolar?: boolean; off?: boolean }) {
  const pt = (x: number, r: number) => {
    const a = ((-150 + 300 * x) * Math.PI) / 180;
    return `${(Math.sin(a) * r).toFixed(2)} ${(-Math.cos(a) * r).toFixed(2)}`;
  };
  const arc = (a: number, b: number) => `M${pt(a, 25)}A25 25 0 ${b - a > 0.6 ? 1 : 0} 1 ${pt(b, 25)}`;
  const rest = off ? "#3f3f3f" : "#1a1a1a";
  const top = bipolar ? -39 : -27;
  return (
    <div className="flex flex-col items-center leading-[26px] text-[#ececec] whitespace-nowrap">
      <span>{label}</span>
      <svg role="slider" aria-label={label} aria-valuenow={v} width="60" height={23 - top} viewBox={`-30 ${top} 60 ${23 - top}`} fill="none" strokeWidth="4">
        {bipolar && <path d="M-8 -38h16l-8 10z" fill={rest} />}
        {bipolar ? (
          <path d={arc(0, 0.49) + arc(0.51, 1)} stroke={rest} />
        ) : (
          <>
            {v < 0.98 && <path d={arc(v + 0.03, 1)} stroke={rest} />}
            <path d={arc(0, v)} stroke={off ? "#a5a5a5" : "#05c3d7"} />
          </>
        )}
        <path d={`M0 0L${pt(v, 26)}`} stroke={rest} />
      </svg>
      <span>{value}</span>
    </div>
  );
}

function Dot({ label, children, on }: { label: string; children?: ReactNode; on?: boolean }) {
  return (
    <button
      aria-label={label}
      className={clsx("flex items-center justify-center w-[27px] h-[27px] rounded-full border-2 border-[#1a1a1a] shrink-0 text-[#ececec]", on ? "bg-[#ff9b36]" : "bg-[#404040]")}
    >
      {children}
    </button>
  );
}

function DeviceTitle({ name, kind = "plugin", className }: { name: string; kind?: "eq" | "native" | "plugin"; className?: string }) {
  return (
    <div className={clsx("flex items-center gap-[7px] h-[35px] px-1.5 shrink-0 font-semibold", kind === "native" ? "text-black" : "text-[#ececec]", className)}>
      <Dot label={`${name} on`} on />
      <Dot label="Fold">
        {kind === "eq" ? <Svg w={16} h={18}><path d="M8 2v11M3 6l5-5 5 5M2 17h12" /></Svg> : <Down className="w-4 h-3.5" />}
      </Dot>
      {kind === "plugin" && (
        <Dot label="Edit plug-in">
          <svg width="18" height="18" fill="currentColor"><path d="M17 4l-4 3-3-2 1-4C7 0 5 4 6 7l-6 7c0 3 3 4 5 2l6-6c4 1 7-2 6-6z" /></svg>
        </Dot>
      )}
      <span className="flex items-center gap-3 mr-auto whitespace-nowrap">
        {name}
        {kind === "native" && (
          <svg width="22" height="24" fill="#4338f5"><path d="M5 13L1 8l2-1 4 4L5 3l2-1 3 8V0h3v10l2-8 2 1-1 9 3-4 2 1-4 9c-1 7-10 7-12 0z" /></svg>
        )}
      </span>
      <Dot label="Hot-swap"><Svg w={18} h={18}><path d="M8 3C2 4 3 10 4 13M10 15c6-1 5-7 4-10" /><path d="M0 10l4 6 4-5zM10 7l4-6 4 5z" fill="currentColor" stroke="none" /></Svg></Dot>
      <Dot label="Save preset"><svg width="16" height="16"><path d="M1 0h11l3 3v13H1z" fill="#ececec" /><path d="M5 2h5v5H5z" fill="#404040" /></svg></Dot>
      <Dot label="More">
        <svg width="18" height="6" fill="currentColor"><circle cx="3" cy="3" r="2" /><circle cx="9" cy="3" r="2" /><circle cx="15" cy="3" r="2" /></svg>
      </Dot>
    </div>
  );
}

const SPECTRUM =
  "M191 511C225 495 245 484 265 484C305 484 320 560 340 560C360 560 365 420 380 330C392 240 410 230 430 222L445 213L457 207C470 210 472 250 485 300L495 325L508 332L517 349L530 333L545 352L563 393L572 393L583 407L594 396L607 410L618 440L628 428L640 462L646 470L652 503L658 485L664 535L669 480L674 418L679 480L688 585L692 580L696 535L700 575L706 592L712 585L717 500L719 498L724 580L728 605L731 585L736 620L743 658L750 645L757 632L762 620L765 697L770 620L777 565L782 530L786 345L791 540L796 580L799 530L803 600L809 625L814 670L818 610L824 585L829 665L834 580L840 480L845 585L851 630L858 665L863 695L867 660L871 705L876 640L880 560L884 485L888 560L892 665L896 640L900 700L905 660L910 685L915 575L920 640L928 690L935 650L940 590L944 565L948 560L954 468L960 560L965 660L969 640L974 710L977 680L980 725L984 540L989 520L993 680L997 750L1002 690L1008 625L1014 605L1018 565L1022 600L1030 535L1034 530L1037 700L1041 710L1045 620L1048 560L1053 545L1058 545L1061 620L1067 635L1073 640L1076 555L1080 590L1084 630L1087 600L1092 580L1097 640L1101 688L1106 660L1112 640L1118 600L1125 620L1132 550L1136 590L1140 690L1145 580L1149 575L1153 520L1158 600L1162 590L1168 610L1173 560L1177 600L1182 580L1186 570L1191 515L1195 565L1200 525L1205 615L1209 540L1213 575L1217 545L1221 550L1225 618L1230 610L1237 580L1243 505L1248 605L1253 590L1258 640L1263 660L1268 700L1275 690L1282 675L1289 640L1293 715L1297 690L1300 720L1305 690L1311 690L1318 650L1324 710L1330 730L1334 768L1339 710L1345 695L1350 750L1354 768V1071H191Z";
const FREQS = [298, 358, 401, 434, 463, 485, 507, 521, 541, 644, 706, 749, 783, 809, 832, 852, 868, 886, 991, 1051, 1094, 1128, 1156, 1180, 1200, 1218, 1234, 1337];

const BELL = "M0 10h4l7-9h8l7 9h4M4 10l7 9h8l7-9";
const BAND_ICONS = ["M0 1h6l10 9h14M0 19h6l10-9", BELL, BELL, "M0 10h12l10-9h8M12 10l10 9h8", BELL, BELL, BELL, "M0 4h22c5 0 7 3 7 15"];
const NODES: [string, string, boolean][] = [["1", "left-[255px]", false], ["2", "left-[297px]", false], ["3", "left-[455px]", false], ["4", "left-[615px]", true]];

function EqEight() {
  return (
    <div className="flex flex-col w-[1016px] h-[396px] shrink-0 rounded-lg bg-[#777777] pb-1">
      <DeviceTitle name="EQ Eight" kind="eq" />
      <div className="flex grow gap-1 px-1">
        <div className="flex flex-col justify-between w-[101px] py-1 rounded-lg bg-[#595959]">
          <Knob label="Freq" value="5.00 kHz" v={0.817} />
          <Knob label="Gain" value="0.00 dB" v={0.5} bipolar />
          <Knob label="Q" value="0.71" v={0.41} />
        </div>
        <div className="flex flex-col grow gap-1">
          <div className="relative h-[283px] rounded-sm overflow-hidden bg-[#222222] text-[#cccccc]">
            <svg className="absolute inset-0 w-full h-full" viewBox="191 184 1163 887" preserveAspectRatio="none">
              <path d={SPECTRUM} fill="#8c8c8c" />
              <g stroke="#fff" strokeOpacity="0.13" strokeWidth="2" fill="none">
                {FREQS.map((x) => <path key={x} d={`M${x} 184V1071`} vectorEffect="non-scaling-stroke" />)}
                {[274, 453, 632, 804, 983].map((y) => <path key={y} d={`M258 ${y}H1354`} vectorEffect="non-scaling-stroke" />)}
              </g>
              <path d="M191 628H1354" stroke="#05c3d7" strokeWidth="4" vectorEffect="non-scaling-stroke" />
            </svg>
            <div className="absolute left-0 top-[14px] w-10 flex flex-col justify-between h-[255px] text-right leading-7">
              <span>12</span><span>6</span><span>0</span><span>-6</span><span>-12</span>
            </div>
            <span className="absolute left-[218px] bottom-0 leading-6">100</span>
            <span className="absolute left-[458px] bottom-0 leading-6">1k</span>
            <span className="absolute left-[688px] bottom-0 leading-6">10k</span>
            {NODES.map(([n, left, on]) => (
              <span
                key={n}
                className={clsx(
                  "absolute top-[127px] w-7 h-7 rounded-full border-[3px] border-[#ff9b36] flex items-center justify-center text-[18px] leading-none font-semibold",
                  left,
                  on ? "bg-[#ff9b36] text-[#222]" : "text-[#ff9b36]"
                )}
              >
                {n}
              </span>
            ))}
          </div>
          <div className="flex grow gap-1">
            {BAND_ICONS.map((d, i) => (
              <div key={i} className={clsx("flex flex-col items-center grow basis-0 gap-1.5 pt-1.5 rounded-sm", i !== 3 && "bg-[#595959]")}>
                <button
                  aria-label={`Filter ${i + 1} type`}
                  className={clsx("flex items-center justify-between w-[79px] h-7 px-1 border-2 border-[#1a1a1a] text-[#ececec]", i < 4 ? "bg-[#373737]" : "bg-[#484848]")}
                >
                  <Svg w={32} h={20}><path d={d} /></Svg>
                  <Down className="w-3.5 h-3" />
                </button>
                <label className="flex items-center gap-3 text-[#ececec]">
                  <input type="checkbox" defaultChecked={i < 4} className="appearance-none w-6 h-6 border-2 border-[#1a1a1a] bg-[#484848] checked:bg-[#05c3d7]" />
                  <span className="leading-6">{i + 1}</span>
                </label>
              </div>
            ))}
          </div>
        </div>
        <div className="flex flex-col justify-between w-[110px] pt-3 pb-3 px-1.5 rounded-lg bg-[#595959] text-[#ececec] leading-[26px]">
          <div className="flex justify-between">
            <Box label="Audition" className="w-[45px]"><Svg w={20} h={20}><path d="M7 18c-2 0-1-5-2-6C1 6 5 1 10 1s9 5 5 11c-1 1 0 6-2 6" strokeWidth="3" /></Svg></Box>
            <Box on label="Analyze" className="w-[45px]"><Svg w={32} h={18}><path d="M2 18v-6M7 18V6M12 18V1M17 18V4M22 18V8M28 18v-3" /></Svg></Box>
          </div>
          <div>Mode<Select label="Mode" value="Stereo" className="leading-6" /></div>
          <div>Edit<Box dim className="w-full">L</Box></div>
          <div className="whitespace-nowrap">Adapt. Q<Box on className="w-full">On</Box></div>
          <div>Scale<Value label="Scale" value="100 %" fill={75} /></div>
          <div>Gain<Value label="Output gain" value="0.00 dB" fill={50} /></div>
        </div>
      </div>
    </div>
  );
}

function Saturator() {
  return (
    <div className="flex flex-col w-[479px] h-[396px] shrink-0 rounded-lg overflow-hidden bg-[#595959]">
      <DeviceTitle name="Saturator" kind="native" className="bg-[#547b85]" />
      <div className="flex flex-col gap-2 mx-2 mt-[9px] p-2 rounded-md bg-[#222222]">
        <div className="relative w-[222px] h-7 bg-[#05c3d7] text-[#222]">
          <select aria-label="Curve" className="block w-full h-full pl-1 appearance-none bg-transparent outline-none"><option>Analog Clip</option></select>
          <Down className="absolute right-1 top-2 w-3.5 h-3 pointer-events-none" />
        </div>
        <svg className="w-full h-[142px] bg-[#222]" viewBox="67 350 656 445" preserveAspectRatio="none" fill="none">
          <path d="M90 352H669V793H90z" fill="#1c4d50" />
          <g stroke="#777" strokeWidth="2">
            <path d="M68 353H722V790H68z" vectorEffect="non-scaling-stroke" />
            <path d="M395 353V790M68 572H722" stroke="#5f8083" vectorEffect="non-scaling-stroke" />
          </g>
          <path d="M70 714C130 710 175 710 230 680L395 572L545 475C610 430 650 434 720 431" stroke="#05c3d7" strokeWidth="4" vectorEffect="non-scaling-stroke" />
        </svg>
        <div className="flex items-center h-7 pl-[30px] pr-5">
          <span className="text-[#05c3d7]">No Clip</span>
          <Down className="w-3 h-2 ml-[30px] text-[#05c3d7]" />
          <button className="w-[87px] h-7 ml-[34px] bg-[#ff9b36] text-[#222]">Color</button>
          <span className="grow" />
          <span className="text-[#a8a8a8]">Amt Lo</span>
          <span className="ml-2.5 text-[#ff9b36]">0.0 %</span>
        </div>
      </div>
      <div className="grid grid-cols-3 mx-6 mt-[9px]">
        <Knob label="Drive" value="0.0 dB" v={0.5} />
        <Knob label="Output" value="0.0 dB" v={1} />
        <Knob label="Dry/Wet" value="100 %" v={1} />
      </div>
    </div>
  );
}

function PluginPad() {
  return (
    <div className="flex flex-col w-[295px] pt-[17px]">
      <div className="flex items-end h-[295px] rounded-sm bg-[#222222]"><span className="w-7 h-7 rounded-full border-[3px] border-[#ff9b36]" /></div>
      <div className="flex gap-2 mt-2.5">
        <Select label="Pad X" value="none" className="grow" />
        <Select label="Pad Y" value="none" className="grow" />
      </div>
    </div>
  );
}

function Plugin({ name }: { name: string }) {
  return (
    <div className="flex flex-col w-[316px] h-[396px] shrink-0 rounded-lg overflow-hidden bg-[#595959]">
      <DeviceTitle name={name} className="bg-[#777777]" />
      <div className="pl-[11px]"><PluginPad /></div>
    </div>
  );
}

function Prism() {
  return (
    <div className="flex flex-col w-[502px] h-[396px] shrink-0 rounded-lg overflow-hidden bg-[#595959]">
      <DeviceTitle name="TDR Prism" className="bg-[#777777]" />
      <div className="flex pl-[11px] text-[#ececec]">
        <div className="flex flex-col w-[154px] pt-2 leading-[26px]">
          <span>Sidechain</span>
          <Select label="Sidechain input" value="No Input" />
          <div className="h-[27px] mt-[7px] mb-[11px] border-2 border-[#1a1a1a]" />
          <Knob label="Gain" value="0.00 dB" v={0.417} off />
          <div className="h-1" />
          <Knob label="Mix" value="100 %" v={1} off />
          <Box dim className="mt-2">Mute</Box>
        </div>
        <div className="flex flex-col items-center w-[31px] pt-2 gap-1">
          <span className="w-0.5 h-[158px] bg-[#303030]" />
          <svg width="8" height="16" fill="#303030"><path d="M0 0l8 8-8 8z" /></svg>
          <span className="w-0.5 h-[158px] bg-[#303030]" />
        </div>
        <PluginPad />
      </div>
    </div>
  );
}

function Devices() {
  return (
    <div className="flex mt-[19px] pl-3.5 pr-[17px]">
      <div className="w-[487px] h-[396px] shrink-0 rounded-lg bg-[#595959] border-t-[35px] border-[#777777]" />
      <Meter clip />
      <EqEight />
      <Meter clip />
      <Saturator />
      <Meter />
      <Prism />
      <Meter />
      <Plugin name="MusePl..." />
      <Meter />
      <Plugin name="Ozone I..." />
      <Meter />
      <div className="flex items-center justify-center grow h-[396px] rounded-lg bg-[#595959] text-[#ececec]">Drop Audio Effects Here</div>
    </div>
  );
}

/* ---------- status bar ---------- */

function Thumbnail() {
  return (
    <svg width="284" height="49" className="shrink-0">
      <rect x="2" y="2" width="280" height="45" rx="8" fill="#4a4a4a" stroke="#191919" strokeWidth="4" />
      <path d="M4 5h275v3H4z" fill="#666" />
      <path d="M10 8h82v29H10z" fill="#1c1c1c" />
      <path d="M10 22h82" stroke="#0a6470" strokeWidth="2" />
      <path d="M36 20v4M41 20v4M57 20v4M73 20v4M94 12v4M94 31v3" stroke="#b97530" strokeWidth="4" />
      <path d="M12 42h80" stroke="#7d9a9c" strokeWidth="3" strokeDasharray="3 6" />
      <path d="M106 4h50v4h-50z" fill="#33556a" />
      <path d="M108 9h48v23h-48z" fill="#163c40" />
      <path d="M110 28C128 28 135 14 154 14" stroke="#07737f" strokeWidth="2" fill="none" />
      <path d="M108 9h20v3h-20z" fill="#07909f" />
      <path d="M127 31h10" stroke="#c17c33" strokeWidth="3" />
      <path d="M114 40h4M130 40h4M146 40h4" stroke="#0a8592" strokeWidth="6" />
      <path d="M180 9h30v30h-30zM215 9h30v30h-30zM250 9h28v30h-28z" fill="#1c1c1c" />
    </svg>
  );
}

function StatusBar() {
  const pill = "h-7 border-2 border-[#1a1a1a] rounded-full bg-[#484848]";
  return (
    <div className="flex items-center h-[49px] mt-[15px] mb-[13px] pl-5 pr-[22px] text-[#ececec]">
      <span className="flex items-center justify-center w-7 h-7 rounded-full bg-[#ff9b36] text-[#222] font-bold">i</span>
      <div className="flex items-center h-[41px] grow ml-[34px] pl-3.5 rounded-lg bg-[#595959] whitespace-nowrap">
        <span>A new update is available.</span>
        <a href="#notes" className="ml-1.5 mr-2 underline underline-offset-4 decoration-2">Click here for release notes.</a>
        <button className={clsx(pill, "w-[189px]")}>Update Now</button>
        <button className={clsx(pill, "w-[230px] ml-[9px]")}>Remind me later</button>
        <button className={clsx(pill, "w-[78px] ml-[9px]")}>?</button>
        <span className="grow" />
        <span className="self-end w-[74px] h-4 mb-1 mr-[207px] rounded-lg border-2 border-[#999] bg-[#222]" />
      </div>
      <div className="flex items-center w-[464px] h-[41px] ml-[19px] rounded-lg bg-[#595959]">
        <svg width="14" height="18" fill="#ececec" className="ml-3.5"><path d="M0 1l14 8-14 8z" /></svg>
        <span className="w-0.5 h-full ml-3 bg-[#303030]" />
      </div>
      <button aria-label="Device view" className="flex items-center justify-center w-[41px] h-[41px] ml-[19px] rounded-l-lg bg-[#ff9b36]">
        <svg width="16" height="14"><path d="M8 0l8 14H0z" /></svg>
      </button>
      <span className="flex items-center justify-center w-[78px] h-[41px] ml-0.5 bg-[#595959]">Main</span>
      <Thumbnail />
      <Svg w={32} h={28} className="ml-9 text-[#2f2f2f]"><path d="M2 28V8M12 28V0M20 28V10M29 28V4" strokeWidth="4" /></Svg>
      <Down className="w-3.5 h-3 ml-[11px] text-[#2f2f2f]" />
    </div>
  );
}

export default function App() {
  return (
    <div className="min-h-screen bg-black pr-0.5 pb-[3px] flex flex-col font-['Inter',sans-serif] font-medium text-[21px] leading-7">
      <div className="flex flex-col grow rounded-[20px] overflow-hidden bg-[#404040] border-r-2 border-b-2 border-[#6a6a6a]">
        <header>
          <div className="relative flex items-center h-11 pl-[9px] gap-[15px]">
            <button aria-label="Close" className="flex items-center justify-center w-[22px] h-[22px] rounded-full bg-[#ff5f57]"><i className="w-1.5 h-1.5 rounded-full bg-[#8a0000]" /></button>
            <button aria-label="Minimize" className="w-[22px] h-[22px] rounded-full bg-[#febc2e]" />
            <button aria-label="Zoom" className="w-[22px] h-[22px] rounded-full bg-[#28c840]" />
            <h1 className="absolute inset-x-0 text-center text-[24px] font-semibold text-[#a9a9a9] pointer-events-none pl-[24px]">wall schranz</h1>
          </div>
          <Toolbar />
        </header>
        <main className="flex gap-[18px] mt-[31px] pl-3.5 pr-[17px]">
          <Browser />
          <div className="flex flex-col grow min-w-0">
            <Overview />
            <div className="flex bg-[#595959] rounded-b-lg overflow-hidden">
              <Timeline />
              <Headers />
            </div>
          </div>
        </main>
        <Devices />
        <StatusBar />
      </div>
    </div>
  );
}
